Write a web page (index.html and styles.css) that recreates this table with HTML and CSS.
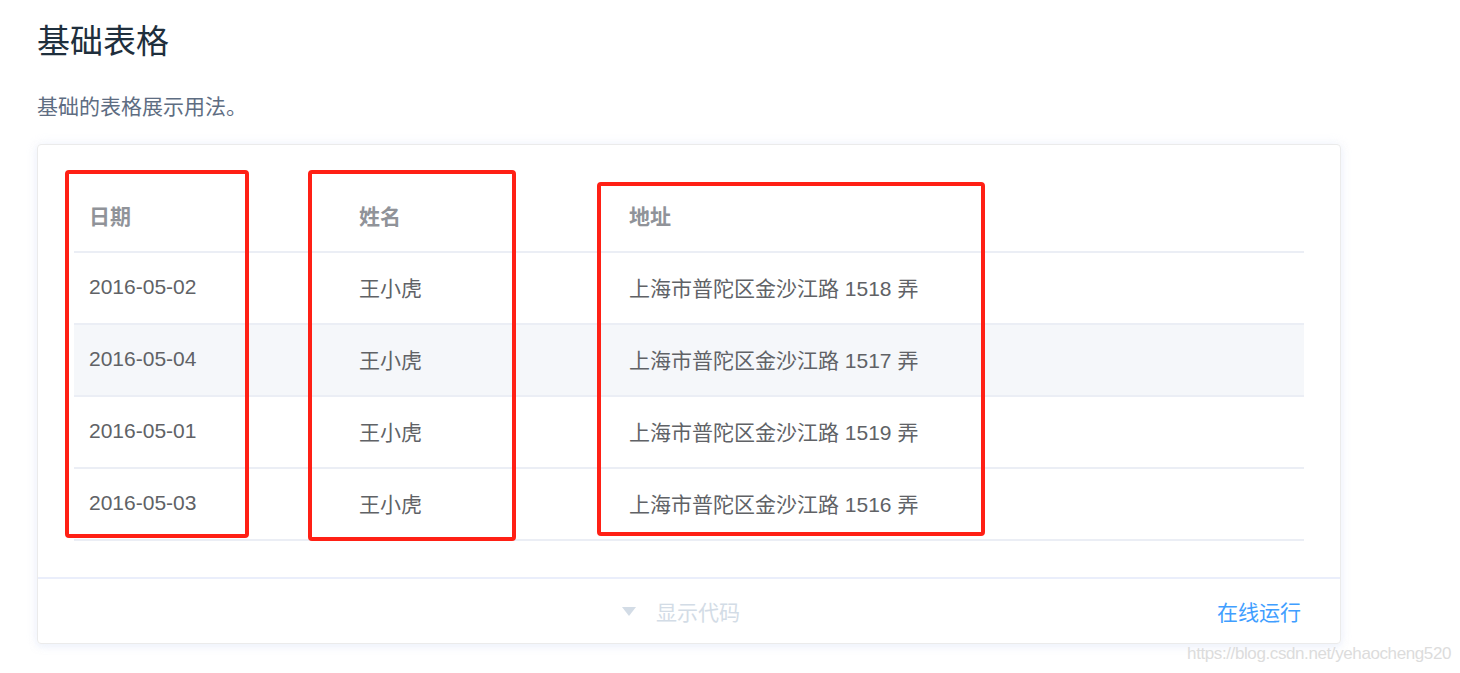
FILE: index.html
```html
<!DOCTYPE html>
<html lang="zh-CN">
<head>
<meta charset="utf-8">
<title>基础表格</title>
<link rel="stylesheet" href="styles.css">
</head>
<body>
<div class="page">
  <h2 class="title">基础表格</h2>
  <p class="desc">基础的表格展示用法。</p>
  <div class="card">
    <div class="demo">
      <table class="table">
        <colgroup><col class="c1"><col class="c2"><col class="c3"></colgroup>
        <thead>
          <tr><th>日期</th><th>姓名</th><th>地址</th></tr>
        </thead>
        <tbody>
          <tr><td>2016-05-02</td><td>王小虎</td><td>上海市普陀区金沙江路 1518 弄</td></tr>
          <tr class="stripe"><td>2016-05-04</td><td>王小虎</td><td>上海市普陀区金沙江路 1517 弄</td></tr>
          <tr><td>2016-05-01</td><td>王小虎</td><td>上海市普陀区金沙江路 1519 弄</td></tr>
          <tr><td>2016-05-03</td><td>王小虎</td><td>上海市普陀区金沙江路 1516 弄</td></tr>
        </tbody>
      </table>
    </div>
    <div class="footer">
      <span></span>
      <span class="toggle">
        <svg class="caret" width="14" height="9" viewBox="0 0 14 9"><polygon points="0,0 14,0 7,9" fill="#d3dce6"/></svg>
        显示代码
      </span>
      <a class="run">在线运行</a>
    </div>
  </div>
  <div class="mark box1"></div>
  <div class="mark box2"></div>
  <div class="mark box3"></div>
  <div class="watermark">https://blog.csdn.net/yehaocheng520</div>
</div>
</body>
</html>
```
FILE: styles.css
```css
html, body {
  margin: 0;
  padding: 0;
  background: #fff;
}
.page {
  position: relative;
  width: 1460px;
  height: 673px;
  padding-left: 37px;
  box-sizing: border-box;
  font-family: "Liberation Sans", "Noto Sans CJK SC", sans-serif;
  overflow: hidden;
}
.title {
  margin: 0;
  padding-top: 17px;
  font-size: 33px;
  line-height: 50px;
  font-weight: 400;
  color: #1f2f3d;
}
.desc {
  margin: 24px 0 0;
  font-size: 21px;
  line-height: 32px;
  color: #5e6d82;
}
.card {
  margin-top: 21px;
  width: 1304px;
  box-sizing: border-box;
  border: 1px solid #ebebeb;
  border-radius: 4px;
  box-shadow: 0 0 12px 0 rgba(232, 237, 250, 0.6), 0 3px 6px 0 rgba(232, 237, 250, 0.5);
}
.demo {
  padding: 37px 36px 36px 36px;
}
.table {
  width: 100%;
  border-collapse: collapse;
  table-layout: fixed;
  font-size: 21px;
}
.c1, .c2 { width: 270px; }
.table th, .table td {
  text-align: left;
  padding: 0 15px;
  border-bottom: 2px solid #ebeef5;
  box-sizing: border-box;
  white-space: nowrap;
}
.table th {
  height: 70px;
  padding-bottom: 3px;
  color: #909399;
  font-weight: 700;
}
.table td {
  height: 72px;
  padding-bottom: 3px;
  color: #606266;
}
.stripe td {
  background: #f5f7fa;
}
.footer {
  border-top: 2px solid #eaeefb;
  height: 64px;
  display: grid;
  grid-template-columns: 1fr auto 1fr;
  align-items: center;
  font-size: 21px;
}
.toggle {
  display: flex;
  align-items: center;
  gap: 20px;
  color: #d3dce6;
  margin-right: 16px;
}
.caret {
  display: block;
}
.run {
  justify-self: end;
  margin-right: 39px;
  color: #409eff;
}
.mark {
  position: absolute;
  border: 4px solid #ff2015;
  border-radius: 4px;
  box-sizing: border-box;
}
.box1 { left: 65px; top: 170px; width: 184px; height: 368px; }
.box2 { left: 308px; top: 170px; width: 208px; height: 371px; }
.box3 { left: 597px; top: 182px; width: 388px; height: 354px; }
.watermark {
  position: absolute;
  right: 9px;
  top: 644px;
  font-family: "Liberation Sans Narrow", "Liberation Sans", sans-serif;
  font-size: 17px;
  color: #dcdcdc;
  letter-spacing: -0.4px;
}
```
